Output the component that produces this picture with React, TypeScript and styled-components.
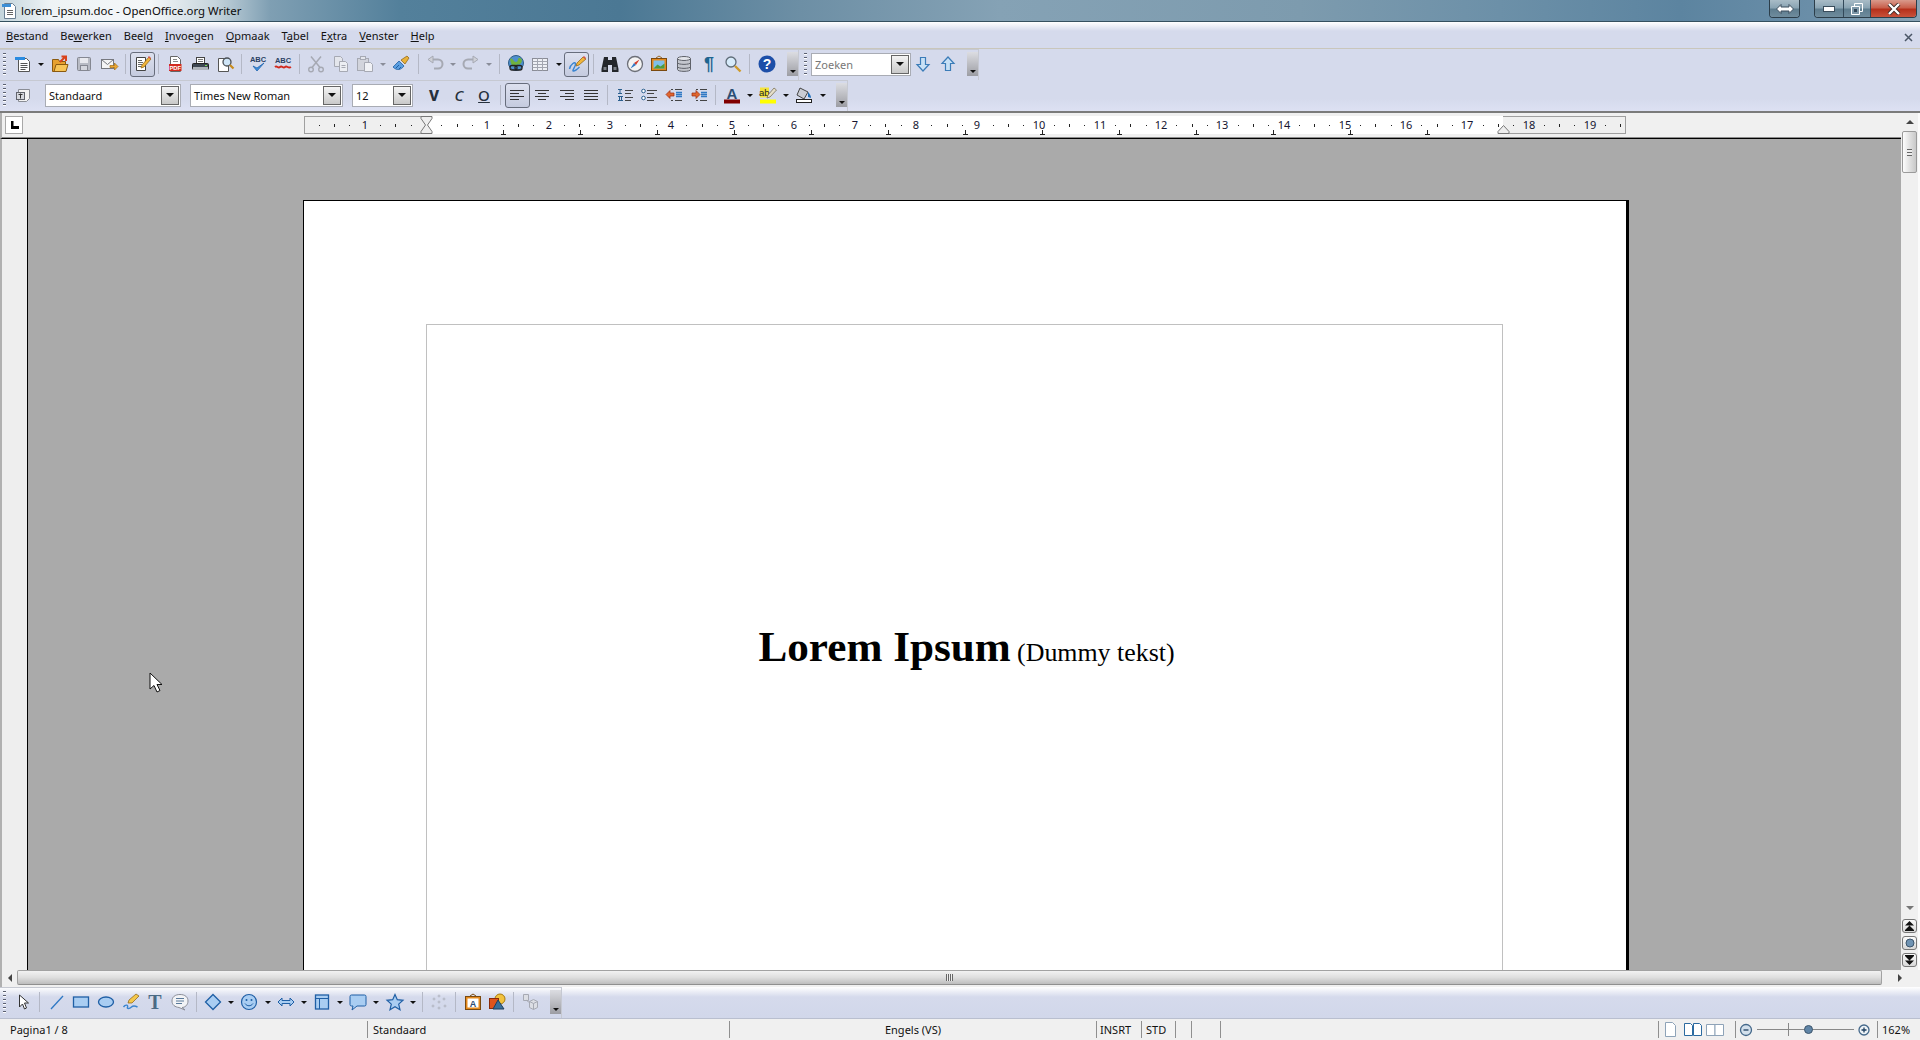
import React from 'react';
import styled, { createGlobalStyle } from 'styled-components';

const GlobalStyle = createGlobalStyle`
  html, body { margin: 0; padding: 0; overflow: hidden; background: #f0f0f0; }
  * { box-sizing: border-box; }
`;

const UI_FONT = `"Noto Sans", "Liberation Sans", sans-serif`;

const Shell = styled.div`
  width: 1920px;
  height: 1040px;
  display: flex;
  flex-direction: column;
  overflow: hidden;
  position: relative;
  font-family: ${UI_FONT};
  font-size: 11px;
  color: #111;
`;

/* ---------- title bar ---------- */

const TitleBar = styled.div`
  height: 22px;
  flex: none;
  display: flex;
  align-items: flex-start;
  border-bottom: 1px solid #35505f;
  background: linear-gradient(90deg, #c4d5dc 0, #eef3f5 50px, #f4f7f8 150px, #c5d4dc 215px, #7f9fb3 270px, #53809b 400px, #4b7894 620px, #6d8fa5 800px, #85a2b5 1000px, #7d9bae 1300px, #6c90a8 1500px, #5c84a0 1680px, #6a8ea8 1810px, #8aa5b6 1920px);
`;

const TitleIcon = styled.svg`
  width: 16px;
  height: 18px;
  margin: 2px 3px 0 2px;
  flex: none;
`;

const TitleText = styled.div`
  font-size: 11.4px;
  line-height: 21px;
  color: #0b0b0b;
  flex: 1;
`;

const WinGroup = styled.div`
  display: flex;
  height: 18px;
  margin-left: ${(p) => p.$gap || 0}px;
  margin-right: ${(p) => p.$right || 0}px;
  border: 1px solid #2c3e4a;
  border-top: none;
  border-radius: 0 0 4px 4px;
  overflow: hidden;
  box-shadow: inset 0 0 0 1px rgba(255, 255, 255, 0.35);
`;

const WinButton = styled.div`
  width: ${(p) => p.$w}px;
  display: flex;
  align-items: center;
  justify-content: center;
  background: ${(p) =>
    p.$close
      ? 'linear-gradient(180deg, #d99a8c 0, #c9604c 45%, #b6301b 55%, #c9523a 100%)'
      : 'linear-gradient(180deg, #a9bcc7 0, #8aa4b3 45%, #5e7d8f 55%, #6f8c9d 100%)'};
  & + & { border-left: 1px solid #33495a; }
`;

/* ---------- menu ---------- */

const MenuBar = styled.div`
  height: 27px;
  flex: none;
  display: flex;
  align-items: flex-end;
  padding: 0 0 4px 0;
  border-bottom: 1px solid #c9c6bb;
  background: linear-gradient(180deg, #fff 0, #d5daec 9px, #d5daec 100%);
`;

const MenuItem = styled.div`
  padding: 0 6px;
  line-height: 16px;
  white-space: nowrap;
  u { text-underline-offset: 1px; }
`;

const DocClose = styled.div`
  margin-left: auto;
  margin-right: 7px;
  margin-bottom: 2px;
  display: flex;
`;

/* ---------- toolbars ---------- */

const ToolArea = styled.div`
  flex: none;
  background: linear-gradient(180deg, #d5daec 0, #d5daec 80%, #dde1f3 100%);
`;

const ToolRow = styled.div`
  height: 31px;
  display: flex;
`;

const Toolbar = styled.div`
  width: ${(p) => p.$w}px;
  height: 100%;
  display: flex;
  align-items: center;
  padding-left: ${(p) => p.$pad ?? 11}px;
  padding-bottom: 2px;
  border-top: 1px solid #c6c9d2;
  border-right: 1px solid #c6c9d2;
  position: relative;
`;

const Grip = styled.div`
  width: 3px;
  height: 22px;
  margin-right: ${(p) => p.$after ?? 0}px;
  flex: none;
  background: repeating-linear-gradient(180deg, #5a5f70 0, #5a5f70 1px, #fff 1px, #fff 2px, transparent 2px, transparent 4px);
`;

const ToolButton = styled.div`
  width: 24.7px;
  height: 25px;
  flex: none;
  display: flex;
  align-items: center;
  justify-content: center;
  border-radius: 3px;
  border: 1px solid ${(p) => (p.$active ? '#676d7c' : 'transparent')};
  background: ${(p) => (p.$active ? 'linear-gradient(180deg, #dde1ef, #c5cbdf)' : 'transparent')};
`;

const Drop = styled.div`
  width: 11.6px;
  flex: none;
  display: flex;
  justify-content: center;
  &::before {
    content: '';
    border-left: 3px solid transparent;
    border-right: 3px solid transparent;
    border-top: 3px solid ${(p) => (p.$off ? '#8a8d99' : '#111')};
  }
`;

const Separator = styled.div`
  width: 8.5px;
  height: 20px;
  flex: none;
  display: flex;
  justify-content: center;
  &::before { content: ''; width: 1px; background: #b4b8c6; }
`;

const Overflow = styled.div`
  width: 11px;
  height: 24px;
  flex: none;
  margin-left: ${(p) => (p.$left === undefined ? 'auto' : `${p.$left}px`)};
  display: flex;
  align-items: flex-end;
  justify-content: center;
  padding-bottom: 3px;
  background: linear-gradient(180deg, #dcdde2 0, #9c9da3 100%);
  &::before {
    content: '';
    border-left: 3px solid transparent;
    border-right: 3px solid transparent;
    border-top: 3px solid #111;
  }
`;

const Combo = styled.div`
  width: ${(p) => p.$w}px;
  height: 23px;
  flex: none;
  margin-left: ${(p) => p.$left ?? 9}px;
  display: flex;
  align-items: center;
  background: #fff;
  border: 1px solid #a9acb4;
  padding-left: 3px;
  color: ${(p) => (p.$muted ? '#777' : '#111')};
  span { flex: 1; white-space: nowrap; }
`;

const ComboArrow = styled.div`
  width: 18px;
  height: 19px;
  margin-right: 1px;
  display: flex;
  align-items: center;
  justify-content: center;
  border: 1px solid #666;
  background: linear-gradient(180deg, #f4f4f4, #c9c9c9);
  &::before {
    content: '';
    border-left: 4px solid transparent;
    border-right: 4px solid transparent;
    border-top: 4px solid #111;
  }
`;

const FormatLetter = styled.div`
  width: 25px;
  flex: none;
  margin-left: ${(p) => p.$left ?? 0}px;
  text-align: center;
  font-size: 15px;
  line-height: 18px;
  color: #26303c;
  font-weight: ${(p) => (p.$bold ? 800 : 500)};
  font-style: ${(p) => (p.$italic ? 'italic' : 'normal')};
  text-decoration: ${(p) => (p.$under ? 'underline' : 'none')};
`;

/* ---------- ruler and work area ---------- */

const MainRow = styled.div`
  flex: 1;
  min-height: 0;
  display: flex;
  background: #f0f0f0;
  border-top: 2px solid #7b7b7b;
`;

const MainColumn = styled.div`
  flex: 1;
  min-width: 0;
  display: flex;
  flex-direction: column;
`;

const RulerRow = styled.div`
  height: 26px;
  flex: none;
  display: flex;
  padding-left: 5px;
  padding-top: 3px;
  border-left: 2px solid #b0b0b0;
  border-bottom: 1px solid #000;
  box-shadow: inset 0 -1px 0 #8c8c8c;
`;

const TabCorner = styled.div`
  width: 18px;
  height: 18px;
  margin-left: -2px;
  display: flex;
  align-items: center;
  justify-content: center;
  border: 1px solid #a8a8a8;
  background: #fff;
`;

const RulerTrack = styled.div`
  width: 1322px;
  height: 18px;
  margin-left: 281px;
  display: flex;
  position: relative;
`;

const RulerMargin = styled.div`
  width: ${(p) => p.$w}px;
  flex: none;
  background: #efefef;
  border: 1px solid #9f9f9f;
  border-left: ${(p) => (p.$side === 'right' ? 'none' : '1px solid #9f9f9f')};
  border-right: ${(p) => (p.$side === 'left' ? 'none' : '1px solid #9f9f9f')};
`;

const RulerBody = styled.div`
  flex: 1;
  background: #fff;
`;

const RulerMarks = styled.svg`
  position: absolute;
  left: 0;
  top: 0;
  width: 1322px;
  height: 22px;
  overflow: visible;
`;

const WorkRow = styled.div`
  flex: 1;
  min-height: 0;
  display: flex;
`;

const SideRuler = styled.div`
  width: 28px;
  flex: none;
  background: #eee;
  border-left: 2px solid #b0b0b0;
  border-right: 1px solid #000;
`;

const Canvas = styled.div`
  flex: 1;
  min-width: 0;
  overflow: hidden;
  background: #aaa;
  padding: 61px 0 0 275px;
  position: relative;
`;

const Page = styled.div`
  width: 1326px;
  height: 1400px;
  background: #fff;
  border-top: 1px solid #000;
  border-left: 1px solid #000;
  border-right: 3px solid #000;
  padding: 123px 0 0 122px;
`;

const MarginBox = styled.div`
  width: 1077px;
  height: 1100px;
  border: 1px solid #c0c0c0;
  padding: 297px 0 0 4px;
  text-align: center;
  font-family: "Liberation Serif", "Times New Roman", serif;
  color: #000;
  line-height: 50px;
`;

const Heading = styled.span`
  font-size: 43.2px;
  font-weight: 700;
`;

const Aside = styled.span`
  font-size: 25.9px;
  margin-left: 3.5px;
`;

const Pointer = styled.svg`
  position: absolute;
  left: 121px;
  top: 533px;
  width: 14px;
  height: 22px;
`;

const VScroll = styled.div`
  width: 19px;
  flex: none;
  display: flex;
  flex-direction: column;
  align-items: flex-start;
  padding: 0 0 3px 1px;
  border-right: 2px solid #fbfbfb;
`;

const ScrollArrow = styled.div`
  width: 15px;
  height: ${(p) => p.$h}px;
  flex: none;
  display: flex;
  align-items: center;
  justify-content: center;
  &::before {
    content: '';
    border-left: 4px solid transparent;
    border-right: 4px solid transparent;
    border-bottom: ${(p) => (p.$dir === 'up' ? '4px solid #444' : 'none')};
    border-top: ${(p) => (p.$dir === 'down' ? '4px solid #777' : 'none')};
  }
`;

const VThumb = styled.div`
  width: 15px;
  height: 42px;
  flex: none;
  display: flex;
  align-items: center;
  justify-content: center;
  border: 1px solid #9a9a9a;
  border-radius: 2px;
  background: linear-gradient(90deg, #fdfdfd, #dcdcdc 60%, #c8c8c8);
`;

const GripLines = styled.div`
  width: ${(p) => (p.$wide ? 7 : 5)}px;
  height: 7px;
  background: ${(p) =>
    p.$wide
      ? 'repeating-linear-gradient(90deg, #666 0, #666 1px, #eee 1px, #eee 2px)'
      : 'repeating-linear-gradient(180deg, #666 0, #666 1px, #eee 1px, #eee 3px)'};
`;

const ScrollFill = styled.div`
  flex: 1;
`;

const NavButton = styled.div`
  width: 15px;
  height: 14px;
  flex: none;
  margin-top: 3px;
  display: flex;
  align-items: center;
  justify-content: center;
  border: 1px solid #777;
  border-radius: 3px;
  background: linear-gradient(180deg, #fafafa, #d8d8d8);
`;

const HScroll = styled.div`
  height: 17px;
  flex: none;
  display: flex;
  align-items: flex-start;
  background: #f0f0f0;
  border-left: 2px solid #b0b0b0;
`;

const HArrow = styled.div`
  width: ${(p) => p.$w}px;
  height: 15px;
  flex: none;
  display: flex;
  align-items: center;
  justify-content: center;
  &::before {
    content: '';
    border-top: 4px solid transparent;
    border-bottom: 4px solid transparent;
    border-right: ${(p) => (p.$dir === 'left' ? '4px solid #444' : 'none')};
    border-left: ${(p) => (p.$dir === 'right' ? '4px solid #444' : 'none')};
  }
`;

const HThumb = styled.div`
  width: 1865px;
  height: 15px;
  flex: none;
  display: flex;
  align-items: center;
  justify-content: center;
  border: 1px solid #a2a2a2;
  border-bottom-color: #8f8f8f;
  border-radius: 2px;
  background: linear-gradient(180deg, #f2f2f2 0, #dedede 50%, #bdbdbd 100%);
`;

/* ---------- drawing bar, status bar ---------- */

const DrawArea = styled.div`
  height: 32px;
  flex: none;
  display: flex;
  border-bottom: 1px solid #b9bfcf;
  background: linear-gradient(180deg, #fff 0, #d5daec 10px, #d1d7ea 100%);
`;

const StatusBar = styled.div`
  height: 21px;
  flex: none;
  display: flex;
  align-items: center;
  background: #f0f0f0;
`;

const StatusCell = styled.div`
  width: ${(p) => p.$w}px;
  height: 17px;
  flex: none;
  display: flex;
  align-items: center;
  justify-content: ${(p) => (p.$center ? 'center' : 'flex-start')};
  padding-left: ${(p) => p.$pad ?? 0}px;
  gap: ${(p) => p.$gap ?? 0}px;
  line-height: 17px;
  white-space: nowrap;
  border-left: ${(p) => (p.$bare ? 'none' : '1px solid #8f8f8f')};
`;

const StatusGap = styled.div`
  flex: 1;
`;

const ZoomTrack = styled.div`
  width: 97px;
  height: 13px;
  flex: none;
  margin: 0 1px 0 2px;
  position: relative;
  background: linear-gradient(#888, #888) center / 100% 1px no-repeat,
    linear-gradient(#888, #888) 31px center / 1px 100% no-repeat;
`;

const ZoomKnob = styled.div`
  position: absolute;
  left: 47px;
  top: 2px;
  width: 9px;
  height: 9px;
  border-radius: 50%;
  border: 1px solid #3d556c;
  background: #5f84a6;
`;

const IconSvg = styled.svg`
  width: 18px;
  height: 18px;
  display: block;
  overflow: visible;
`;

const G = '#a6a9b3';
const BLUE = '#2f78c4';
const LIGHT = '#a9cdf2';

const icons: Record<string, React.ReactNode> = {
  newdoc: (
    <>
      <path d="M4.500 3.500h8l3 3v10h-11z" fill="#fff" stroke="#555" />
      <rect x="1" y="2" width="10" height="3" fill="#2b8be0" />
      <path d="M6.500 8.500h7M6.500 10.500h7M6.500 12.500h7M6.500 14.500h5" stroke="#555" />
    </>
  ),
  open: (
    <>
      <path d="M1.500 4.500h6l1 2h6v10h-13z" fill="#e7a12f" stroke="#8a5a10" />
      <path d="M3 16.500l2-7h12l-2 7z" fill="#f7c557" stroke="#8a5a10" />
      <path d="M9 7l5-5M10.500 1.500H15V6" fill="none" stroke="#d9421c" strokeWidth="2" />
    </>
  ),
  save: (
    <>
      <rect x="2.500" y="2.500" width="13" height="13" rx="1" fill="#b8bbc4" stroke="#858892" />
      <rect x="5" y="3" width="8" height="5" fill="#e8e9ee" />
      <rect x="5.500" y="10.500" width="7" height="5" fill="#d5d7de" stroke="#858892" />
    </>
  ),
  mail: (
    <>
      <rect x="1.500" y="4.500" width="12" height="9" fill="#f5f5f5" stroke="#77797f" />
      <path d="M1.500 4.500l6 5 6-5" fill="none" stroke="#77797f" />
      <path d="M10 10.500h4.500V8l3.500 3.500-3.500 3.500v-2.500H10z" fill="#eda631" stroke="#a06b10" strokeWidth=".7" />
    </>
  ),
  edit: (
    <>
      <path d="M3.500 2.500h9v13h-9z" fill="#fff" stroke="#444" />
      <path d="M5 5.500h4M5 7.500h5M5 9.500h4M5 11.500h3" stroke="#666" />
      <path d="M8 13l1-3 7-8 2 2-7 8z" fill="#f1b53b" stroke="#8b5e0f" strokeWidth=".7" />
      <path d="M15 2l1-1 2 2-1 1z" fill="#d9534a" />
    </>
  ),
  pdf: (
    <>
      <path d="M4.500 1.500h7l3 3v12h-10z" fill="#fff" stroke="#666" />
      <path d="M7 4.500h4M7 6.500h5" stroke="#888" />
      <rect x="3" y="9" width="12.500" height="7" fill="#d32b1f" />
      <text x="9.200" y="14.800" fontSize="5.800" fontWeight="700" textAnchor="middle" fill="#fff" fontFamily="Liberation Sans">PDF</text>
    </>
  ),
  print: (
    <>
      <rect x="5.500" y="2.500" width="8" height="6" fill="#fff" stroke="#444" />
      <path d="M7 4.500h5M7 6.500h5" stroke="#777" />
      <rect x="1.500" y="8.500" width="16" height="6" rx="1" fill="#3e4752" stroke="#222" />
      <rect x="2" y="12" width="15" height="3" fill="#aeb3ba" />
      <rect x="14" y="10" width="2" height="1" fill="#7fe04f" />
    </>
  ),
  preview: (
    <>
      <path d="M2.500 3.500h8l2 2v11h-10z" fill="#fff" stroke="#555" />
      <circle cx="11" cy="7" r="4" fill="#cfe5f7" stroke="#4a4f55" strokeWidth="1.300" />
      <path d="M14 10l3.500 3.500" stroke="#c88b1d" strokeWidth="2.200" />
    </>
  ),
  spell: (
    <>
      <text x="9" y="7" fontSize="7.500" fontWeight="700" textAnchor="middle" fill="#2b3f63" fontFamily="Liberation Sans">ABC</text>
      <path d="M4 11l4 5 7-8-7 5z" fill="#3f8fdd" stroke="#1f63ad" strokeWidth=".8" />
    </>
  ),
  spellauto: (
    <>
      <text x="9" y="8" fontSize="7.500" fontWeight="700" textAnchor="middle" fill="#2b3f63" fontFamily="Liberation Sans">ABC</text>
      <path d="M1 12c2-2 3 2 5 0s3 2 5 0 3 2 6 0" fill="none" stroke="#d2281c" strokeWidth="1.800" />
    </>
  ),
  cut: (
    <>
      <path d="M4 1.500l9 11M14 1.500l-9 11" stroke={G} strokeWidth="1.500" />
      <circle cx="4" cy="14.500" r="2.300" fill="none" stroke={G} strokeWidth="1.400" />
      <circle cx="14" cy="14.500" r="2.300" fill="none" stroke={G} strokeWidth="1.400" />
    </>
  ),
  copy: (
    <>
      <path d="M2.500 1.500h6l2 2v8h-8z" fill="#e4e6ec" stroke={G} />
      <path d="M7.500 6.500h6l2 2v8h-8z" fill="#eceef3" stroke={G} />
      <path d="M9.500 10.500h4M9.500 12.500h4" stroke={G} />
    </>
  ),
  paste: (
    <>
      <rect x="1.500" y="3.500" width="11" height="12" fill="#d2d4dc" stroke={G} />
      <rect x="4.500" y="1.500" width="5" height="3" fill="#e4e6ec" stroke={G} />
      <path d="M8.500 7.500h6l2 2v7h-8z" fill="#f0f1f5" stroke={G} />
    </>
  ),
  brush: (
    <>
      <path d="M1 12l6-6 5 5c-3 4-7 5-11 1z" fill="#5b9ee0" stroke="#1f5fa5" strokeWidth=".8" />
      <path d="M9 5l6-4 2 2-4 6z" fill="#e9b23a" stroke="#8b5e0f" strokeWidth=".7" />
      <path d="M4 13l3-3M7 14l2-2" stroke="#1f5fa5" />
    </>
  ),
  undo: (
    <>
      <path d="M6 4.500h6a4 4 0 0 1 0 9H8" fill="none" stroke={G} strokeWidth="2" />
      <path d="M7 1v7L2 4.500z" fill="#cfd1d8" stroke={G} />
    </>
  ),
  redo: (
    <>
      <path d="M12 4.500H6a4 4 0 0 0 0 9h4" fill="none" stroke={G} strokeWidth="2" />
      <path d="M11 1v7l5-3.500z" fill="#cfd1d8" stroke={G} />
    </>
  ),
  link: (
    <>
      <circle cx="9" cy="8" r="7.500" fill="#4d8fce" stroke="#2e5c86" />
      <path d="M3 4c3-2 3 3 6 3s1-5 4-4 2 5 0 6-4 0-5 2-4 0-5-7z" fill="#6fb23f" />
      <rect x="3" y="10.500" width="7" height="4.500" rx="2" fill="none" stroke="#222" strokeWidth="1.300" />
      <rect x="8" y="10.500" width="7" height="4.500" rx="2" fill="none" stroke="#222" strokeWidth="1.300" />
    </>
  ),
  table: (
    <>
      <rect x="1.500" y="3.500" width="15" height="12" fill="#eef0f5" stroke="#8b8e98" />
      <path d="M1.500 6.500h15M1.500 9.500h15M1.500 12.500h15M6.500 3.500v12M11.500 3.500v12" stroke="#a3a6b0" />
    </>
  ),
  draw: (
    <>
      <path d="M1.500 14c1-5 6-8 6-5s-4 7-2 7 4-2 6-4" fill="none" stroke="#3a85d0" strokeWidth="1.400" />
      <path d="M8 11l1-3 6-6 3 2-7 6z" fill="#f1b53b" stroke="#8b5e0f" strokeWidth=".7" />
      <path d="M15 2l1-1 2 2-1 1z" fill="#d9534a" />
    </>
  ),
  binoculars: (
    <>
      <path d="M3 2h4v3h4V2h4l2.500 12v3H11v-7H7v7H.5v-3z" fill="#23262b" />
      <rect x="2.500" y="12" width="3" height="3" fill="#7a7f87" />
      <rect x="12.500" y="12" width="3" height="3" fill="#7a7f87" />
    </>
  ),
  navigator: (
    <>
      <circle cx="9" cy="9" r="7.500" fill="#f3f3f3" stroke="#6c6f77" strokeWidth="1.300" />
      <path d="M13.500 4.500L10 10 8 8z" fill="#d33c2a" />
      <path d="M4.500 13.500L8 8l2 2z" fill="#2f78c4" />
    </>
  ),
  gallery: (
    <>
      <path d="M6 3l3-2 3 2" fill="none" stroke="#9a6a2a" />
      <rect x="1.500" y="3.500" width="15" height="12" fill="#e58a1e" stroke="#7a4a10" />
      <rect x="3.500" y="5.500" width="11" height="8" fill="#7fc0ea" />
      <path d="M3.500 13.500l4-4 3 2 4-3v5z" fill="#4f9b3a" />
    </>
  ),
  database: (
    <>
      <path d="M2.500 3.500v11c0 2.500 13 2.500 13 0v-11" fill="#c3c6cd" stroke="#5f626a" />
      <ellipse cx="9" cy="3.500" rx="6.500" ry="2" fill="#e3e5ea" stroke="#5f626a" />
      <path d="M2.500 7.500c0 2.500 13 2.500 13 0M2.500 11.500c0 2.500 13 2.500 13 0" fill="none" stroke="#5f626a" />
    </>
  ),
  pilcrow: <text x="9" y="15" fontSize="18" fontWeight="700" textAnchor="middle" fill="#1e6590" fontFamily="Liberation Sans">¶</text>,
  zoom: (
    <>
      <circle cx="7" cy="7" r="5" fill="#d7ebfa" stroke="#5f6c78" strokeWidth="1.300" />
      <path d="M11 11l5.500 5.500" stroke="#cf9a2a" strokeWidth="2.400" />
    </>
  ),
  help: (
    <>
      <circle cx="9" cy="9" r="8.500" fill="#1d4fa8" />
      <text x="9" y="14" fontSize="14" fontWeight="700" textAnchor="middle" fill="#fff" fontFamily="Liberation Sans">?</text>
    </>
  ),
  down: <path d="M6.500 2.500h5v7h3.500L9 16 3 9.500h3.500z" fill="#c7e0f5" stroke="#3b7cb8" strokeWidth="1.200" />,
  up: <path d="M6.500 15.500h5v-7H15L9 2 3 8.500h3.500z" fill="#c7e0f5" stroke="#3b7cb8" strokeWidth="1.200" />,
  style: (
    <>
      <path d="M4.500 3.500h11v9l-3 3h-8z" fill="#f3f3f3" stroke="#8a8d95" />
      <rect x="2.500" y="6.500" width="8" height="7" fill="#d6d8de" stroke="#60636b" />
      <path d="M6.500 7.500v5M4.500 8.500h4" stroke="#333" />
    </>
  ),
  alignleft: <path d="M2 4.500h14M2 7.500h9M2 10.500h14M2 13.500h9" stroke="#333" />,
  aligncenter: <path d="M2 4.500h14M5 7.500h8M2 10.500h14M5 13.500h8" stroke="#333" />,
  alignright: <path d="M2 4.500h14M7 7.500h9M2 10.500h14M7 13.500h9" stroke="#333" />,
  justify: <path d="M2 4.500h14M2 7.500h14M2 10.500h14M2 13.500h14" stroke="#333" />,
  numbered: (
    <>
      <path d="M2 3.500h4M4 3.500v4M2 7.500h4M2 10.500h5M3.500 10.500v4M5.500 10.500v4M2 14.500h5" stroke="#2b5f8e" />
      <path d="M9 4.500h8M9 7.500h6M9 11.500h8M9 14.500h6" stroke="#444" />
    </>
  ),
  bullets: (
    <>
      <circle cx="3.500" cy="5" r="1.800" fill="#fff" stroke="#2b5f8e" />
      <circle cx="3.500" cy="12" r="1.800" fill="#fff" stroke="#2b5f8e" />
      <path d="M7 4.500h10M7 7.500h7M7 11.500h10M7 14.500h7" stroke="#444" />
    </>
  ),
  outdent: (
    <>
      <path d="M10 3.500h7M10 14.500h7M6 3.500h2M6 14.500h2" stroke="#444" />
      <path d="M11 6.500h6M11 8.500h6M11 10.500h6" stroke={BLUE} strokeWidth="1.300" />
      <path d="M1 8.500l4-4v2.500h4v3H5v2.500z" fill="#e0662e" stroke="#9c2a10" strokeWidth=".7" />
    </>
  ),
  indent: (
    <>
      <path d="M10 3.500h7M10 14.500h7M6 3.500h2M6 14.500h2" stroke="#444" />
      <path d="M11 6.500h6M11 8.500h6M11 10.500h6" stroke={BLUE} strokeWidth="1.300" />
      <path d="M10 8.500l-4-4v2.500H2v3h4v2.500z" fill="#e0662e" stroke="#9c2a10" strokeWidth=".7" />
    </>
  ),
  fontcolor: (
    <>
      <text x="9" y="12.500" fontSize="15" fontWeight="700" textAnchor="middle" fill="#2c4d73" fontFamily="Liberation Sans">A</text>
      <rect x="1" y="13.500" width="16" height="4" fill="#800000" />
    </>
  ),
  highlight: (
    <>
      <rect x="1" y="1.500" width="9" height="10" fill="#f3e33a" />
      <text x="5.300" y="10" fontSize="9.500" fontWeight="500" textAnchor="middle" fill="#222" fontFamily="Liberation Sans">ab</text>
      <path d="M8 12l1-3 6-7 2.500 2-6.500 7z" fill="#e6dfc9" stroke="#6d6448" strokeWidth=".7" />
      <rect x="1" y="13.500" width="16" height="4" fill="#ffff00" />
    </>
  ),
  background: (
    <>
      <path d="M5 2l8 4-4 7-7-4z" fill="#c9ccd3" stroke="#444" />
      <path d="M13 6c2 2 3 4 3 6l-3-1z" fill="#1f6fb8" />
      <rect x="1.500" y="13.500" width="15" height="3" fill="#fff" stroke="#222" />
    </>
  ),
  select: <path d="M5.500 2v12l3-3 2 5 2-1-2-5h4z" fill="#fff" stroke="#333" />,
  line: <path d="M3 16L15 3" stroke="#2f78c4" strokeWidth="1.300" />,
  rect: <rect x="1.500" y="4" width="15" height="10" fill={LIGHT} stroke="#1f5fa5" strokeWidth="1.300" />,
  ellipse: <ellipse cx="9" cy="9" rx="7.500" ry="5" fill={LIGHT} stroke="#1f5fa5" strokeWidth="1.300" />,
  freehand: (
    <>
      <path d="M1.500 14c2-3 5-2 4 0s2 2 4 0 4-1 6 0" fill="none" stroke="#3a85d0" strokeWidth="1.400" />
      <path d="M6 10l1-3 7-6 3 2-7 7z" fill="#f4c84b" stroke="#8b5e0f" strokeWidth=".7" />
    </>
  ),
  text: <text x="9" y="16" fontSize="20" fontWeight="700" textAnchor="middle" fill="#4a6a85" fontFamily="Liberation Serif">T</text>,
  note: (
    <>
      <path d="M9 1.500c5 0 8 2.500 8 6.500s-3 6.500-6 6.500l3 2.500-6-2.500c-4-.5-7-2.500-7-6.500s3-6.500 8-6.500z" fill="#f2f3f6" stroke="#8b8e98" />
      <path d="M5 5.500h8M5 8h8M5 10.500h6" stroke="#5a7a9a" />
    </>
  ),
  diamond: <path d="M9 1.500L16.500 9 9 16.500 1.500 9z" fill={LIGHT} stroke="#1f5fa5" strokeWidth="1.300" />,
  smiley: (
    <>
      <circle cx="9" cy="9" r="7.500" fill={LIGHT} stroke="#1f5fa5" strokeWidth="1.200" />
      <circle cx="6.500" cy="7" r="1" fill="#1f5fa5" />
      <circle cx="11.500" cy="7" r="1" fill="#1f5fa5" />
      <path d="M5 10.500c2 3 6 3 8 0" fill="none" stroke="#1f5fa5" />
    </>
  ),
  arrows: <path d="M1 9l4-4v2.500h8V5l4 4-4 4v-2.500H5V13z" fill={LIGHT} stroke="#1f5fa5" />,
  flow: (
    <>
      <rect x="2.500" y="2" width="13" height="14" fill={LIGHT} stroke="#1f5fa5" strokeWidth="1.300" />
      <path d="M2.500 5.500h13M6.500 5.500V16" stroke="#1f5fa5" />
    </>
  ),
  speech: <path d="M2.500 2h13a1.500 1.500 0 0 1 1.500 1.500v8a1.500 1.500 0 0 1-1.500 1.500H8l-5 4 1-4H2.500A1.500 1.500 0 0 1 1 11.500v-8A1.500 1.500 0 0 1 2.500 2z" fill={LIGHT} stroke="#1f5fa5" />,
  star: <path d="M9 1.500l2.300 5.200 5.700.6-4.300 3.800 1.300 5.600L9 13.800l-5 2.900 1.300-5.600L1 7.300l5.700-.6z" fill={LIGHT} stroke="#1f5fa5" strokeWidth="1.200" />,
  points: (
    <>
      {[[9, 3], [4, 6], [14, 6], [9, 9], [3, 13], [15, 13], [9, 15]].map(([cx, cy]) => (
        <circle key={`${cx}-${cy}`} cx={cx} cy={cy} r="1" fill="none" stroke={G} strokeWidth=".7" />
      ))}
    </>
  ),
  textbox: (
    <>
      <path d="M6 3l3-2 3 2" fill="none" stroke="#7a4a10" />
      <rect x="1.500" y="3.500" width="15" height="13" fill="#e58a1e" stroke="#7a4a10" />
      <rect x="3.500" y="5.500" width="11" height="9" fill="#fff" />
      <text x="9" y="13.500" fontSize="9" fontWeight="700" textAnchor="middle" fill="#2c4d73" fontFamily="Liberation Sans">A</text>
    </>
  ),
  fontwork: (
    <>
      <circle cx="12" cy="6" r="5" fill="#f2c23f" stroke="#a67a10" />
      <rect x="1.500" y="5.500" width="9" height="10" fill="#e0541c" stroke="#8a2a08" />
      <path d="M10 7l6 9H5z" fill="#3a6f9a" stroke="#1f3f5f" />
    </>
  ),
  extrude: (
    <>
      <path d="M2.500 1.500h5v6h-5zM5 7l4 3" fill="#dcdee4" stroke={G} />
      <path d="M8.500 8.500l4-2 4 2v6l-4 2-4-2z" fill="#dcdee4" stroke={G} />
      <path d="M8.500 8.500l4 2 4-2M12.500 10.500v6" fill="none" stroke={G} />
    </>
  ),
  pageSingle: <path d="M3.500 1.500h7l3 3v11h-10z" fill="#fff" stroke="#8ea3b8" />,
  pageDouble: (
    <>
      <path d="M.5 2.500h6l2 2v10h-8z" fill="#fff" stroke="#2c6aa0" />
      <path d="M9.500 2.500h6l2 2v10h-8z" fill="#fff" stroke="#2c6aa0" />
    </>
  ),
  pageBook: (
    <>
      <path d="M.5 3.500h8.500v11H.5z" fill="#fff" stroke="#8ea3b8" />
      <path d="M9 3.500h8.500v11H9z" fill="#fff" stroke="#8ea3b8" />
    </>
  ),
  zoomOut: (
    <>
      <circle cx="9" cy="9" r="5.500" fill="#d3e0ec" stroke="#44688a" strokeWidth="1.300" />
      <path d="M6.500 9h5" stroke="#1d3f60" strokeWidth="1.300" />
    </>
  ),
  zoomIn: (
    <>
      <circle cx="9" cy="9" r="5" fill="#eef3f7" stroke="#44688a" strokeWidth="1.300" />
      <path d="M6.500 9h5M9 6.500v5" stroke="#1d3f60" strokeWidth="1.300" />
    </>
  ),
};

const Icon = ({ name }: { name: string }) => <IconSvg viewBox="0 0 18 18">{icons[name]}</IconSvg>;

// '|' is a separator, 'v' a drop arrow, 'o' a greyed drop arrow, '!name' a pressed button
const renderTools = (list: string[]) =>
  list.map((item, i) => {
    if (item === '|') return <Separator key={i} />;
    if (item === 'v') return <Drop key={i} />;
    if (item === 'o') return <Drop key={i} $off />;
    const active = item.startsWith('!');
    return (
      <ToolButton key={i} $active={active}>
        <Icon name={active ? item.slice(1) : item} />
      </ToolButton>
    );
  });

const standardTools = ['newdoc', 'v', 'open', 'save', 'mail', '|', '!edit', '|', 'pdf', 'print', 'preview', '|', 'spell', 'spellauto', '|', 'cut', 'copy', 'paste', 'o', 'brush', '|', 'undo', 'o', 'redo', 'o', '|', 'link', 'table', 'v', '!draw', '|', 'binoculars', 'navigator', 'gallery', 'database', 'pilcrow', 'zoom', '|', 'help'];
const alignTools = ['!alignleft', 'aligncenter', 'alignright', 'justify', '|', 'numbered', 'bullets', 'outdent', 'indent', '|', 'fontcolor', 'v', 'highlight', 'v', 'background', 'v'];
const drawTools = ['select', '|', 'line', 'rect', 'ellipse', 'freehand', 'text', 'note', '|', 'diamond', 'v', 'smiley', 'v', 'arrows', 'v', 'flow', 'v', 'speech', 'v', 'star', 'v', '|', 'points', '|', 'textbox', 'fontwork', '|', 'extrude'];

const menus: [string, string, string][] = [
  ['', 'B', 'estand'],
  ['Be', 'w', 'erken'],
  ['Beel', 'd', ''],
  ['', 'I', 'nvoegen'],
  ['', 'O', 'pmaak'],
  ['T', 'a', 'bel'],
  ['E', 'x', 'tra'],
  ['', 'V', 'enster'],
  ['', 'H', 'elp'],
];

const RULER_ZERO = 122;
const CM = 61.25;

const Ruler = () => {
  const ticks: React.ReactNode[] = [];
  for (let i = -7; i <= 78; i++) {
    const x = Math.round(RULER_ZERO + (i * CM) / 4);
    if (i === 0) continue;
    if (i % 4 === 0) {
      const n = i < 0 ? -i / 4 : i / 4;
      ticks.push(
        <text key={i} x={x} y="13" fontSize="11" textAnchor="middle" fill="#151530" fontFamily="Noto Sans">
          {n}
        </text>
      );
    } else if (i % 2 === 0) {
      ticks.push(<rect key={i} x={x} y="8" width="1" height="3" fill="#222" />);
    } else {
      ticks.push(<rect key={i} x={x} y="9" width="1" height="1" fill="#222" />);
    }
  }
  const stops: React.ReactNode[] = [];
  for (let x = 199; x < 1190; x += 77) {
    stops.push(<path key={x} d={`M${x + 0.5} 14v4M${x - 2} 18.500h5`} stroke="#222" fill="none" />);
  }
  return (
    <RulerTrack>
      <RulerMargin $w={122} $side="left" />
      <RulerBody />
      <RulerMargin $w={123} $side="right" />
      <RulerMarks viewBox="0 0 1322 22">
        {ticks}
        {stops}
        <path d="M117 .5h11v2L123.500 9l4.500 6.500v2h-11v-2l4.500-6.500L117 2.500z" fill="#eee" stroke="#777" />
        <path d="M1194 17.500h11v-2l-5.500-6-5.500 6z" fill="#eee" stroke="#777" />
      </RulerMarks>
    </RulerTrack>
  );
};

const App = () => (
  <Shell>
    <GlobalStyle />
    <TitleBar>
      <TitleIcon viewBox="0 0 16 18">
        <path d="M2.500 1.500h8l3 3v12h-11z" fill="#fff" stroke="#6a7f92" />
        <rect x="0" y="2" width="9" height="3" fill="#3b8fd6" />
        <path d="M5 8.500h6M5 10.500h6M5 12.500h6" stroke="#666" />
      </TitleIcon>
      <TitleText>lorem_ipsum.doc - OpenOffice.org Writer</TitleText>
      <WinGroup>
        <WinButton $w={29}>
          <svg width="18" height="10" viewBox="0 0 18 10">
            <path d="M.5 5L5 .5v2.500h8V.5L17.500 5 13 9.500V7H5v2.500z" fill="#fff" stroke="#3a4d5c" />
          </svg>
        </WinButton>
      </WinGroup>
      <WinGroup $gap={14} $right={3}>
        <WinButton $w={28}>
          <svg width="12" height="6" viewBox="0 0 12 6"><rect x=".5" y=".5" width="11" height="5" fill="#fff" stroke="#3a4d5c" /></svg>
        </WinButton>
        <WinButton $w={27}>
          <svg width="12" height="12" viewBox="0 0 12 12">
            <path d="M3.500.5h8v8h-8z" fill="none" stroke="#fff" />
            <path d="M.5 3.500h8v8h-8z" fill="#7e98a8" stroke="#fff" />
            <rect x="3" y="6" width="3" height="3" fill="#32475a" />
          </svg>
        </WinButton>
        <WinButton $w={46} $close>
          <svg width="14" height="12" viewBox="0 0 14 12"><path d="M2 1l10 10M12 1L2 11" stroke="#3b2a26" strokeWidth="4" /><path d="M2 1l10 10M12 1L2 11" stroke="#fff" strokeWidth="2.400" /></svg>
        </WinButton>
      </WinGroup>
    </TitleBar>

    <MenuBar>
      {menus.map(([a, b, c]) => (
        <MenuItem key={a + b + c}>
          {a}
          <u>{b}</u>
          {c}
        </MenuItem>
      ))}
      <DocClose>
        <svg width="9" height="9" viewBox="0 0 9 9"><path d="M1 1l7 7M8 1L1 8" stroke="#4a5566" strokeWidth="1.500" /></svg>
      </DocClose>
    </MenuBar>

    <ToolArea>
      <ToolRow>
        <Toolbar $w={799} $pad={3}>
          <Grip $after={5} />
          {renderTools(standardTools)}
          <Overflow />
        </Toolbar>
        <Toolbar $w={180} $pad={5}>
          <Grip $after={4} />
          <Combo $w={100} $left={0} $muted>
            <span>Zoeken</span>
            <ComboArrow />
          </Combo>
          {renderTools(['down', 'up'])}
          <Overflow />
        </Toolbar>
      </ToolRow>
      <ToolRow>
        <Toolbar $w={848} $pad={3}>
          <Grip $after={5} />
          {renderTools(['style'])}
          <Combo $w={136} $left={9.3}>
            <span>Standaard</span>
            <ComboArrow />
          </Combo>
          <Combo $w={153}>
            <span>Times New Roman</span>
            <ComboArrow />
          </Combo>
          <Combo $w={61}>
            <span>12</span>
            <ComboArrow />
          </Combo>
          <FormatLetter $bold $left={8.5}>V</FormatLetter>
          <FormatLetter $italic>C</FormatLetter>
          <FormatLetter $under>O</FormatLetter>
          <Separator />
          {renderTools(alignTools)}
          <Overflow />
        </Toolbar>
      </ToolRow>
    </ToolArea>

    <MainRow>
      <MainColumn>
        <RulerRow>
          <TabCorner>
            <svg width="9" height="8" viewBox="0 0 9 8"><path d="M1 0h2.500v5H9v3H1z" fill="#000" /></svg>
          </TabCorner>
          <Ruler />
        </RulerRow>
        <WorkRow>
          <SideRuler />
          <Canvas>
            <Page>
              <MarginBox>
                <Heading>Lorem Ipsum</Heading> <Aside>(Dummy tekst)</Aside>
              </MarginBox>
            </Page>
            <Pointer viewBox="0 0 14 22">
              <path d="M1 1v16l4-3.500 3 6.500 3-1.500-3-6h5z" fill="#fff" stroke="#111" />
            </Pointer>
          </Canvas>
        </WorkRow>
      </MainColumn>
      <VScroll>
        <ScrollArrow $h={18} $dir="up" />
        <VThumb><GripLines /></VThumb>
        <ScrollFill />
        <ScrollArrow $h={16} $dir="down" />
        <NavButton>
          <svg width="11" height="10" viewBox="0 0 11 10"><path d="M5.500 0l4.500 4.500H1zM5.500 4.500l4.500 4.500H1z" fill="#111" /><rect x="1" y="9" width="9" height="1" fill="#111" /></svg>
        </NavButton>
        <NavButton>
          <svg width="10" height="10" viewBox="0 0 10 10"><circle cx="5" cy="5" r="4" fill="#6f93b3" stroke="#3d556c" /></svg>
        </NavButton>
        <NavButton>
          <svg width="11" height="10" viewBox="0 0 11 10"><rect x="1" y="0" width="9" height="1" fill="#111" /><path d="M5.500 5.500L1 1h9zM5.500 10L1 5.500h9z" fill="#111" /></svg>
        </NavButton>
      </VScroll>
    </MainRow>

    <HScroll>
      <HArrow $w={15} $dir="left" />
      <HThumb><GripLines $wide /></HThumb>
      <HArrow $w={36} $dir="right" />
    </HScroll>

    <DrawArea>
      <Toolbar $w={562} $pad={3}>
        <Grip $after={5} />
        {renderTools(drawTools)}
        <Overflow />
      </Toolbar>
    </DrawArea>

    <StatusBar>
      <StatusCell $w={367} $pad={10} $bare>Pagina1 / 8</StatusCell>
      <StatusCell $w={362} $pad={5}>Standaard</StatusCell>
      <StatusCell $w={367} $center>Engels (VS)</StatusCell>
      <StatusCell $w={45} $pad={3}>INSRT</StatusCell>
      <StatusCell $w={34} $pad={4}>STD</StatusCell>
      <StatusCell $w={16} />
      <StatusCell $w={29} />
      <StatusCell $w={1} />
      <StatusGap />
      <StatusCell $w={77} $pad={3} $gap={4}>
        <Icon name="pageSingle" />
        <Icon name="pageDouble" />
        <Icon name="pageBook" />
      </StatusCell>
      <StatusCell $w={142} $pad={1}>
        <Icon name="zoomOut" />
        <ZoomTrack><ZoomKnob /></ZoomTrack>
        <Icon name="zoomIn" />
      </StatusCell>
      <StatusCell $w={43} $pad={4}>162%</StatusCell>
    </StatusBar>
  </Shell>
);

export default App;
